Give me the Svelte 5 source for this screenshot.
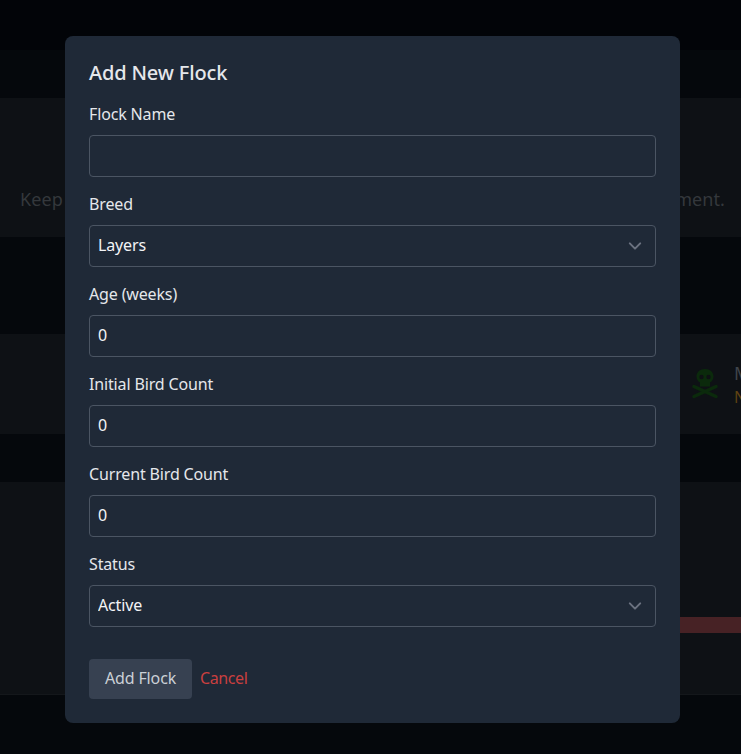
<script>
  let name = $state('')
  let breed = $state('Layers')
  let age = $state(0)
  let initialCount = $state(0)
  let currentCount = $state(0)
  let status = $state('Active')
</script>

<div class="page">
  <div class="topbar"></div>
  <div class="subbar"></div>
  <section class="hero">
    <h1>Flock Overview</h1>
    <p>Keep track of your flock's health, feed, eggs, and expenses for better management.</p>
  </section>
  <div class="gap-a"></div>
  <section class="alerts">
    <svg class="skull" viewBox="0 0 28 32" width="28" height="32" aria-hidden="true">
      <path fill="#0b2a0c" d="M14 1c-5 0-8.500 3-8.500 7.500 0 2.800 1.400 4.800 3.500 6v4h10v-4c2.100-1.200 3.500-3.200 3.500-6C22.500 4 19 1 14 1z" />
      <circle cx="10.500" cy="9" r="2.200" fill="#0e1114" />
      <circle cx="17.500" cy="9" r="2.200" fill="#0e1114" />
      <path stroke="#0b2a0c" stroke-width="3.500" stroke-linecap="round" d="M3 18.500l22 10M25 18.500l-22 10" />
    </svg>
    <div class="alert-text">
      <span class="alert-title">Mortality</span>
      <span class="alert-note">No data</span>
    </div>
  </section>
  <div class="gap-b"></div>
  <section class="chart">
    <div class="bar"></div>
  </section>
</div>

<div class="backdrop">
  <form class="modal" onsubmit={(e) => e.preventDefault()}>
    <h2>Add New Flock</h2>

    <label for="name">Flock Name</label>
    <input id="name" type="text" bind:value={name} />

    <label for="breed">Breed</label>
    <select id="breed" bind:value={breed}>
      <option>Layers</option>
      <option>Broilers</option>
    </select>

    <label for="age">Age (weeks)</label>
    <input id="age" type="number" bind:value={age} />

    <label for="initial">Initial Bird Count</label>
    <input id="initial" type="number" bind:value={initialCount} />

    <label for="current">Current Bird Count</label>
    <input id="current" type="number" bind:value={currentCount} />

    <label for="status">Status</label>
    <select id="status" bind:value={status}>
      <option>Active</option>
      <option>Sold</option>
    </select>

    <div class="actions">
      <button type="submit" class="submit">Add Flock</button>
      <button type="button" class="cancel">Cancel</button>
    </div>
  </form>
</div>

<style>
  :global(body) {
    margin: 0;
    background: #05080c;
    font-family: "Noto Sans", Lato, sans-serif;
    overflow: hidden;
  }

  .page {
    height: 754px;
    overflow: hidden;
    display: flex;
    flex-direction: column;
  }

  .topbar {
    height: 50px;
    background: #020408;
  }

  .subbar {
    height: 48px;
    background: #05080c;
  }

  .hero {
    height: 139px;
    box-sizing: border-box;
    padding: 24px 0 0 4px;
    background: #0e1115;
    text-align: center;
  }

  h1 {
    margin: 0 0 23px;
    font-size: 30px;
    line-height: 40px;
    color: #34383c;
  }

  .hero p {
    margin: 0;
    white-space: nowrap;
    font-size: 18px;
    line-height: 28px;
    letter-spacing: 0.04px;
    color: #34383c;
  }

  .gap-a {
    height: 97px;
  }

  .alerts {
    height: 100px;
    background: #0e1115;
    display: flex;
    align-items: center;
    gap: 15px;
    padding-left: 691px;
  }

  .skull {
    flex-shrink: 0;
  }

  .alert-text {
    display: flex;
    flex-direction: column;
    white-space: nowrap;
  }

  .alert-title {
    color: #3f444a;
    font-size: 18px;
    line-height: 26px;
  }

  .alert-note {
    color: #5f4312;
    font-size: 16px;
    line-height: 22px;
  }

  .gap-b {
    height: 48px;
  }

  .chart {
    height: 213px;
    background: #0e1115;
    border-bottom: 1px solid #14171b;
    box-sizing: border-box;
    padding-top: 135px;
  }

  .bar {
    height: 16px;
    margin-left: 300px;
    background: #472225;
  }

  .backdrop {
    position: fixed;
    inset: 0;
    display: flex;
    align-items: flex-start;
    justify-content: center;
    padding-top: 36px;
    box-sizing: border-box;
  }

  .modal {
    width: 615px;
    height: 687px;
    box-sizing: border-box;
    margin-left: 4px;
    padding: 24px;
    background: #1f2937;
    border-radius: 8px;
    color: #e5e7eb;
    letter-spacing: -0.15px;
    display: flex;
    flex-direction: column;
  }

  h2 {
    margin: 0 0 16px;
    font-size: 20px;
    line-height: 26px;
    font-weight: 500;
    color: #e5e7eb;
  }

  label {
    font-size: 16px;
    line-height: 24px;
    margin-bottom: 9px;
    color: #e5e7eb;
  }

  input,
  select {
    height: 42px;
    box-sizing: border-box;
    width: 100%;
    margin-bottom: 15px;
    padding: 0 8px 2px;
    background-color: #1f2937;
    border: 1px solid #4b5563;
    border-radius: 4px;
    color: #f3f4f6;
    font: inherit;
    font-size: 16px;
    letter-spacing: inherit;
    appearance: none;
    outline: none;
  }

  select {
    background-image: url("data:image/svg+xml,%3Csvg xmlns='http://www.w3.org/2000/svg' viewBox='0 0 20 20' fill='none'%3E%3Cpath stroke='%236b7280' stroke-linecap='round' stroke-linejoin='round' stroke-width='1.500' d='M6 8l4 4 4-4'/%3E%3C/svg%3E");
    background-repeat: no-repeat;
    background-position: right 7px center;
    background-size: 26px 26px;
  }

  input[type="number"]::-webkit-inner-spin-button,
  input[type="number"]::-webkit-outer-spin-button {
    appearance: none;
    margin: 0;
  }

  .actions {
    display: flex;
    align-items: center;
    gap: 8px;
    margin-top: 17px;
  }

  button {
    font: inherit;
    font-size: 16px;
    letter-spacing: inherit;
    border: none;
    cursor: pointer;
  }

  .submit {
    height: 40px;
    padding: 0 16px 2px;
    background: #374151;
    border-radius: 4px;
    color: #cbd0d6;
  }

  .cancel {
    padding: 0 0 2px;
    background: none;
    color: #c93f3f;
    letter-spacing: -0.4px;
  }
</style>
